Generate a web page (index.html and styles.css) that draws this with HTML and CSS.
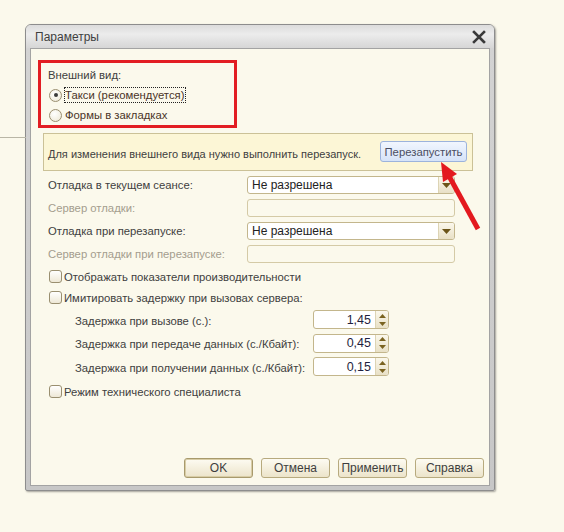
FILE: index.html
```html
<!DOCTYPE html>
<html lang="ru">
<head>
<meta charset="utf-8">
<title>Параметры</title>
<link rel="stylesheet" href="styles.css">
</head>
<body>
<div class="bgline"></div>
<div class="window">
  <div class="titlebar">
    <span class="title">Параметры</span>
    <svg class="close" width="14" height="14" viewBox="0 0 14 14"><path d="M2 2 L12 12 M12 2 L2 12" stroke="#3a3a3a" stroke-width="2.6" stroke-linecap="square"/></svg>
  </div>
  <div class="content">
    <div class="redbox">
      <div class="group-label">Внешний вид:</div>
      <div class="radio-row"><span class="radio checked"></span><span class="focus">Такси (рекомендуется)</span></div>
      <div class="radio-row"><span class="radio"></span><span class="rtext">Формы в закладках</span></div>
    </div>
    <div class="notice">
      <span class="notice-text">Для изменения внешнего вида нужно выполнить перезапуск.</span>
      <span class="restart">Перезапустить</span>
    </div>
    <div class="form">
      <span class="lbl">Отладка в текущем сеансе:</span>
      <div class="select"><span class="val">Не разрешена</span><span class="drop"><svg width="9" height="5" viewBox="0 0 9 5"><path d="M0 0 H9 L4.5 5 Z" fill="#6b5418"/></svg></span></div>
      <span class="lbl disabled">Сервер отладки:</span>
      <div class="input off"></div>
      <span class="lbl">Отладка при перезапуске:</span>
      <div class="select"><span class="val">Не разрешена</span><span class="drop"><svg width="9" height="5" viewBox="0 0 9 5"><path d="M0 0 H9 L4.5 5 Z" fill="#6b5418"/></svg></span></div>
      <span class="lbl disabled">Сервер отладки при перезапуске:</span>
      <div class="input off"></div>
    </div>
    <div class="check-row first"><span class="check"></span><span>Отображать показатели производительности</span></div>
    <div class="check-row"><span class="check"></span><span>Имитировать задержку при вызовах сервера:</span></div>
    <div class="delays">
      <span class="lbl">Задержка при вызове (с.):</span>
      <div class="spin"><span class="num">1,45</span><span class="arrows"><svg width="7" height="12" viewBox="0 0 7 12"><path d="M0 4 L3.5 0 L7 4 Z M0 8 H7 L3.5 12 Z" fill="#7a6320"/></svg></span></div>
      <span class="lbl">Задержка при передаче данных (с./Кбайт):</span>
      <div class="spin"><span class="num">0,45</span><span class="arrows"><svg width="7" height="12" viewBox="0 0 7 12"><path d="M0 4 L3.5 0 L7 4 Z M0 8 H7 L3.5 12 Z" fill="#7a6320"/></svg></span></div>
      <span class="lbl">Задержка при получении данных (с./Кбайт):</span>
      <div class="spin"><span class="num">0,15</span><span class="arrows"><svg width="7" height="12" viewBox="0 0 7 12"><path d="M0 4 L3.5 0 L7 4 Z M0 8 H7 L3.5 12 Z" fill="#7a6320"/></svg></span></div>
    </div>
    <div class="check-row last"><span class="check"></span><span>Режим технического специалиста</span></div>
    <div class="footer">
      <span class="btn default">OK</span>
      <span class="btn">Отмена</span>
      <span class="btn">Применить</span>
      <span class="btn">Справка</span>
    </div>
  </div>
</div>
<svg class="arrow" width="564" height="532" viewBox="0 0 564 532">
  <line x1="478" y1="229" x2="449" y2="176" stroke="#e3191f" stroke-width="5"/>
  <polygon points="441,162 457,174 443,182" fill="#e3191f"/>
</svg>
</body>
</html>
```
FILE: styles.css
```css
* { box-sizing: border-box; }
html, body { margin: 0; padding: 0; }
body {
  width: 564px;
  height: 532px;
  background: #fbf9ec;
  font-family: "Liberation Sans", Arial, sans-serif;
  font-size: 11.3px;
  color: #404040;
  position: relative;
  overflow: hidden;
  padding-top: 24px;
  padding-left: 25px;
  white-space: nowrap;
}
.bgline {
  position: absolute;
  left: 0;
  top: 137px;
  width: 26px;
  height: 1px;
  background: #b9b6a6;
}
.window {
  width: 470px;
  height: 467px;
  border: 1px solid #8d8d8d;
  border-radius: 6px 6px 2px 2px;
  background: linear-gradient(#e6e6e6, #d3d3d3 24px, #c7c7c7);
  padding: 0 4px 4px;
  box-shadow: 1px 1px 2px rgba(0,0,0,0.35);
  display: flex;
  flex-direction: column;
}
.titlebar {
  height: 23px;
  display: flex;
  align-items: center;
  justify-content: space-between;
  padding: 1px 8px 0 9px;
  background: linear-gradient(#dcdcdc, #ececec 40%, #d6d6d6);
  margin: 0 -4px;
  border-radius: 5px 5px 0 0;
}
.title { color: #3f3f3f; font-size: 12px; }
.close { display: block; }
.content {
  height: 438px;
  background: #fbf9ec;
  border: 1px solid #a3a3a3;
  padding: 11px 16px 7px 12px;
  display: flex;
  flex-direction: column;
}
.redbox {
  width: 199px;
  margin-left: -5px;
  border: 3px solid #e21d23;
  padding: 3px 0 0 7px;
}
.group-label { height: 19px; line-height: 19px; }
.radio-row {
  height: 20px;
  display: flex;
  align-items: center;
}
.radio {
  width: 13px;
  height: 13px;
  border-radius: 50%;
  border: 1px solid #9a8f70;
  background: radial-gradient(circle at 40% 35%, #ffffff, #ece6d2);
  margin-left: 1px;
  margin-right: 2px;
  position: relative;
  flex: none;
}
.radio.checked::after {
  content: "";
  position: absolute;
  left: 3.5px;
  top: 3.5px;
  width: 4px;
  height: 4px;
  border-radius: 50%;
  background: #3a3a3a;
}
.focus {
  border: 1px dotted #222;
  padding: 0 1px 0 0;
  line-height: 14px;
  color: #4a3428;
}
.rtext { margin-left: 1px; color: #4a3428; }
.notice {
  margin-top: 5px;
  width: 430px;
  height: 38px;
  background: #fcf6d6;
  border: 1px solid #cbc197;
  display: flex;
  align-items: center;
  justify-content: space-between;
  padding: 0 5px 0 4px;
}
.notice-text { margin-top: 3px; font-size: 11px; }
.restart {
  width: 87px;
  height: 21px;
  border: 1px solid #9cb3dc;
  border-radius: 3px;
  background: linear-gradient(#f1f6fe, #d6e3f8);
  color: #4a4e62;
  display: flex;
  align-items: center;
  justify-content: center;
  margin-top: -1px;
}
.form {
  margin-top: 5px;
  padding-left: 5px;
  display: grid;
  grid-template-columns: 199px 208px;
  grid-auto-rows: 18px;
  row-gap: 5px;
  align-items: center;
}
.lbl { line-height: 18px; }
.lbl.disabled { color: #a49d8e; }
.select, .input {
  height: 18px;
  border: 1px solid #c3b68c;
  border-radius: 3px;
  background: #ffffff;
  display: flex;
  align-items: center;
  justify-content: space-between;
}
.input.off { background: #fbf9ec; border-color: #d4caa6; }
.val { padding-left: 4px; color: #222; font-size: 12px; }
.drop {
  width: 16px;
  height: 100%;
  border-left: 1px solid #ddd4b4;
  background: linear-gradient(#fbf8ec, #e8e0c6);
  border-radius: 0 2px 2px 0;
  display: flex;
  align-items: center;
  justify-content: center;
}
.drop svg { display: block; }
.check-row {
  height: 21px;
  display: flex;
  align-items: center;
  padding-left: 6px;
}
.check-row.first { margin-top: 3px; }
.check-row.last { margin-top: 5px; }
.check {
  width: 13px;
  height: 13px;
  border: 1px solid #9a8f70;
  border-radius: 3px;
  background: linear-gradient(#ffffff, #eee8d6);
  margin-right: 2px;
  flex: none;
}
.delays {
  margin-top: 2px;
  padding-left: 32px;
  display: grid;
  grid-template-columns: 238px 76px;
  grid-auto-rows: 19px;
  row-gap: 4.5px;
  align-items: center;
}
.delays .lbl { line-height: 19px; margin-top: 3px; }
.spin {
  height: 19px;
  border: 1px solid #c3b68c;
  border-radius: 3px;
  background: #ffffff;
  display: flex;
  align-items: center;
  justify-content: flex-end;
}
.num { padding-right: 4px; color: #1f1f40; font-size: 12.5px; }
.arrows {
  width: 13px;
  height: 100%;
  border-left: 1px solid #ddd4b4;
  background: linear-gradient(#fbf8ec, #e8e0c6);
  border-radius: 0 2px 2px 0;
  display: flex;
  align-items: center;
  justify-content: center;
}
.arrows svg { display: block; }
.footer {
  margin-top: auto;
  margin-right: -11px;
  display: flex;
  justify-content: flex-end;
  gap: 8px;
}
.btn {
  width: 69px;
  height: 20px;
  border: 1px solid #b7aa7e;
  border-radius: 3px;
  background: linear-gradient(#fdfbf2, #ece4ca);
  display: flex;
  align-items: center;
  justify-content: center;
  color: #3e3e3e;
  font-size: 12px;
}
.btn.default {
  border-color: #a89a6c;
  box-shadow: inset 0 0 0 1px #d8cda6;
}
.arrow {
  position: absolute;
  left: 0;
  top: 0;
  pointer-events: none;
}
```
